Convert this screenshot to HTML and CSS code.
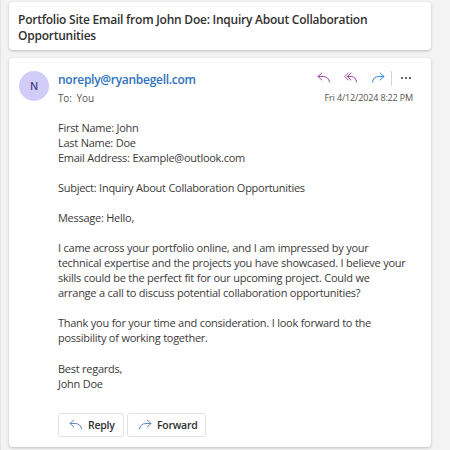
FILE: index.html
```html
<!DOCTYPE html>
<html lang="en">
<head>
<meta charset="utf-8">
<title>Mail</title>
<link rel="stylesheet" href="styles.css">
</head>
<body>
<svg class="sprite" aria-hidden="true">
  <symbol id="reply" viewBox="0 0 14 12"><path d="M4.8 1 1 4.5 4.8 8M1 4.5h5.2c3.5 0 6 2.2 6.3 5.5"/></symbol>
  <symbol id="reply-all" viewBox="0 0 14 12"><path d="M4.3 1 .8 4.5 4.3 8M7 1 3.5 4.5 7 8M3.5 4.5h3.7c3 0 5.2 2.2 5.4 5.5"/></symbol>
  <symbol id="forward" viewBox="0 0 14 12"><path d="M9.2 1 13 4.5 9.2 8M13 4.5H7.8c-3.5 0-6 2.2-6.3 5.5"/></symbol>
</svg>
<main class="pane">
  <header class="card subject">
    <h1>Portfolio Site Email from John Doe: Inquiry About Collaboration<br>Opportunities</h1>
  </header>
  <article class="card message">
    <div class="avatar">N</div>
    <div class="content">
      <div class="top">
        <div class="sender">noreply@ryanbegell.com</div>
        <div class="actions">
          <svg class="icon purple"><use href="#reply"/></svg>
          <svg class="icon purple"><use href="#reply-all"/></svg>
          <svg class="icon blue"><use href="#forward"/></svg>
          <span class="divider"></span>
          <span class="more"><i></i><i></i><i></i></span>
        </div>
      </div>
      <div class="meta"><span class="to">To:&nbsp; You</span><time class="date">Fri 4/12/2024 8:22 PM</time></div>
      <div class="body">
        <p>First Name: John<br>Last Name: Doe<br>Email Address: Example@outlook.com</p>
        <p>Subject: Inquiry About Collaboration Opportunities</p>
        <p>Message: Hello,</p>
        <p>I came across your portfolio online, and I am impressed by your<br>technical expertise and the projects you have showcased. I believe your<br>skills could be the perfect fit for our upcoming project. Could we<br>arrange a call to discuss potential collaboration opportunities?</p>
        <p>Thank you for your time and consideration. I look forward to the<br>possibility of working together.</p>
        <p>Best regards,<br>John Doe</p>
      </div>
      <div class="buttons">
        <button class="btn"><svg class="icon"><use href="#reply"/></svg>Reply</button>
        <button class="btn wide"><svg class="icon"><use href="#forward"/></svg>Forward</button>
      </div>
    </div>
  </article>
</main>
</body>
</html>
```

FILE: styles.css
```css
* { box-sizing: border-box; }
body {
  margin: 0;
  height: 450px;
  overflow: hidden;
  background: #f3f3f3;
  border-left: 1px solid #e4e4e4;
  color: #3b3a39;
  font-family: "Open Sans", "Noto Sans", sans-serif;
  font-size: 11px;
}
.sprite { display: none; }
.pane {
  display: flex;
  flex-direction: column;
  gap: 8px;
  margin: 2px 0 0 8px;
  width: 422px;
}
.card {
  background: #fff;
  border-radius: 4px;
  box-shadow: 0 1px 3px rgba(0, 0, 0, 0.22);
}
.subject { height: 48px; padding: 10px 9px; }
h1 {
  margin: 0;
  font-size: 12px;
  line-height: 16px;
  font-weight: 600;
  letter-spacing: -0.24px;
  color: #323130;
  white-space: nowrap;
}
.message {
  display: flex;
  height: 389px;
  padding: 13px 18px 0 10px;
}
.avatar {
  flex: none;
  width: 30px;
  height: 30px;
  border-radius: 50%;
  background: #d2ccf8;
  color: #4f3f86;
  font-size: 10.5px;
  font-weight: 600;
  line-height: 30px;
  text-align: center;
}
.content { flex: 1; min-width: 0; margin-left: 9px; }
.top { display: flex; justify-content: space-between; height: 18px; }
.sender {
  color: #2f72bd;
  font-size: 12px;
  font-weight: 600;
  line-height: 18px;
  letter-spacing: -0.28px;
}
.actions { display: flex; align-items: flex-start; margin-right: 1px; }
.icon {
  width: 14px;
  height: 12px;
  fill: none;
  stroke: #5c87b8;
  stroke-width: 1;
  stroke-linecap: round;
  stroke-linejoin: round;
}
.actions .icon { margin: 1px 13px 0 0; }
.actions .blue { margin-right: 12px; }
.purple { stroke: #9a4ca5; }
.blue { stroke: #2e8bdc; }
.divider { width: 1px; height: 15px; margin-left: -6px; background: #d6d6d6; }
.more { display: flex; gap: 2px; margin: 6px 1px 0 9px; }
.more i { width: 2px; height: 2px; border-radius: 1px; background: #333; }
.meta { display: flex; justify-content: space-between; height: 18px; line-height: 18px; color: #55534f; white-space: nowrap; }
.to { font-size: 10px; letter-spacing: -0.15px; }
.date { font-size: 9px; letter-spacing: -0.15px; }
.body { margin-top: 12.5px; line-height: 15.1px; letter-spacing: -0.27px; word-spacing: 0.15px; white-space: nowrap; }
.body p { margin: 0 0 15px; }
.buttons { display: flex; gap: 3px; margin-top: 22.5px; }
.btn {
  display: flex;
  align-items: center;
  gap: 5px;
  width: 66px;
  height: 24px;
  padding: 0 0 0 10px;
  border: 1px solid #e1e1e1;
  border-radius: 3px;
  background: #fff;
  color: #323130;
  font: 600 10.5px "Open Sans", sans-serif;
  letter-spacing: -0.25px;
}
.wide { width: 79px; }
```
